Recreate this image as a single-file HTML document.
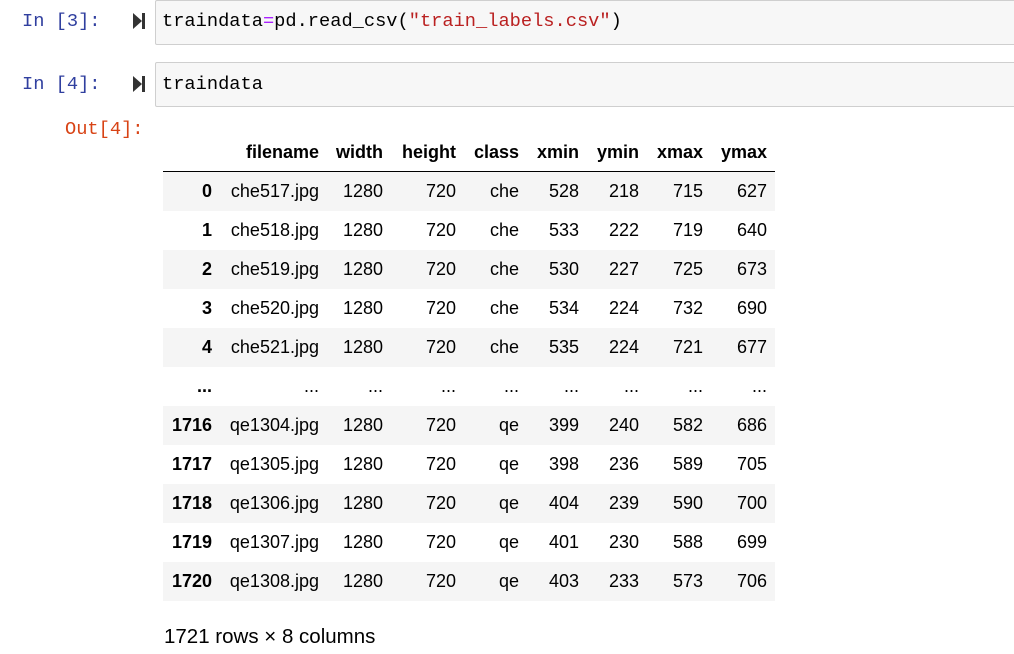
<!DOCTYPE html>
<html><head><style>
body{margin:0;background:#fff;width:1014px;height:654px;overflow:hidden;position:relative;font-family:"Liberation Sans",Arial,sans-serif;}
.p{position:absolute;font-family:"Liberation Mono",monospace;font-size:18.7px;}
.box{position:absolute;left:155px;width:870px;background:#f7f7f7;border:1px solid #cfcfcf;border-radius:2px;}
.code{position:absolute;left:162px;font-family:"Liberation Mono",monospace;font-size:18.7px;color:#000;}
.run{position:absolute;left:133px;width:0;height:0;border-top:8px solid transparent;border-bottom:8px solid transparent;border-left:9px solid #333;}
.runb{position:absolute;left:142px;width:3px;height:16px;background:#333;}
table{position:absolute;left:163px;top:133px;border-collapse:collapse;font-size:18px;color:#000;}
td,th{height:39px;padding:0 8px;text-align:right;white-space:nowrap;}
th{font-weight:bold;}
thead th{border-bottom:1px solid #000;height:38px;}
tbody tr:nth-child(odd){background:#f5f5f5;}
</style></head><body>
<div class="box" style="top:0;height:43px"></div>
<div class="p" style="left:22px;top:10px;color:#303f9f">In [3]:</div>
<div class="run" style="top:13px"></div><div class="runb" style="top:13px"></div>
<div class="code" style="top:10px">traindata<span style="color:#aa22ff">=</span>pd.read_csv(<span style="color:#ba2121">"train_labels.csv"</span>)</div>
<div class="box" style="top:62px;height:43px"></div>
<div class="p" style="left:22px;top:73px;color:#303f9f">In [4]:</div>
<div class="run" style="top:76px"></div><div class="runb" style="top:76px"></div>
<div class="code" style="top:73px">traindata</div>
<div class="p" style="left:65px;top:118px;color:#d84315">Out[4]:</div>
<table>
<colgroup><col style="width:57px"><col style="width:107px"><col style="width:64px"><col style="width:73px"><col style="width:63px"><col style="width:60px"><col style="width:60px"><col style="width:64px"><col style="width:64px"></colgroup>
<thead><tr><th></th><th>filename</th><th>width</th><th>height</th><th>class</th><th>xmin</th><th>ymin</th><th>xmax</th><th>ymax</th></tr></thead>
<tbody>
<tr><th>0</th><td>che517.jpg</td><td>1280</td><td>720</td><td>che</td><td>528</td><td>218</td><td>715</td><td>627</td></tr>
<tr><th>1</th><td>che518.jpg</td><td>1280</td><td>720</td><td>che</td><td>533</td><td>222</td><td>719</td><td>640</td></tr>
<tr><th>2</th><td>che519.jpg</td><td>1280</td><td>720</td><td>che</td><td>530</td><td>227</td><td>725</td><td>673</td></tr>
<tr><th>3</th><td>che520.jpg</td><td>1280</td><td>720</td><td>che</td><td>534</td><td>224</td><td>732</td><td>690</td></tr>
<tr><th>4</th><td>che521.jpg</td><td>1280</td><td>720</td><td>che</td><td>535</td><td>224</td><td>721</td><td>677</td></tr>
<tr style="background:#fff"><th>...</th><td>...</td><td>...</td><td>...</td><td>...</td><td>...</td><td>...</td><td>...</td><td>...</td></tr>
<tr style="background:#f5f5f5"><th>1716</th><td>qe1304.jpg</td><td>1280</td><td>720</td><td>qe</td><td>399</td><td>240</td><td>582</td><td>686</td></tr>
<tr style="background:#fff"><th>1717</th><td>qe1305.jpg</td><td>1280</td><td>720</td><td>qe</td><td>398</td><td>236</td><td>589</td><td>705</td></tr>
<tr style="background:#f5f5f5"><th>1718</th><td>qe1306.jpg</td><td>1280</td><td>720</td><td>qe</td><td>404</td><td>239</td><td>590</td><td>700</td></tr>
<tr style="background:#fff"><th>1719</th><td>qe1307.jpg</td><td>1280</td><td>720</td><td>qe</td><td>401</td><td>230</td><td>588</td><td>699</td></tr>
<tr style="background:#f5f5f5"><th>1720</th><td>qe1308.jpg</td><td>1280</td><td>720</td><td>qe</td><td>403</td><td>233</td><td>573</td><td>706</td></tr>
</tbody></table>
<div style="position:absolute;left:164px;top:625px;font-size:20.5px;color:#000">1721 rows × 8 columns</div>
</body></html>
